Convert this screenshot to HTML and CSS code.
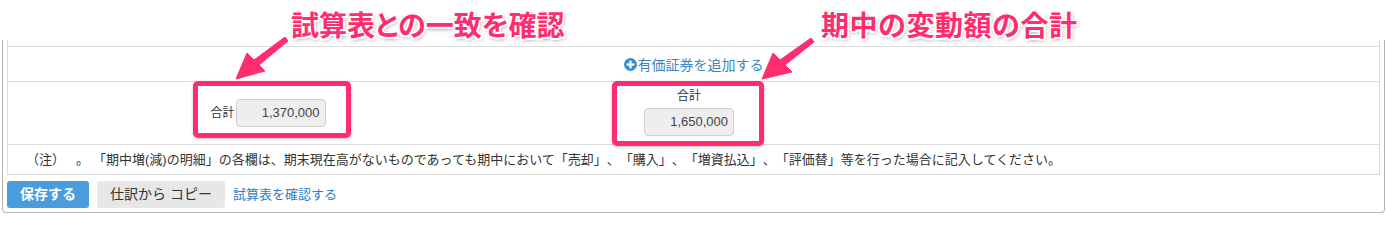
FILE: index.html
```html
<!DOCTYPE html>
<html lang="ja">
<head>
<meta charset="utf-8">
<title>有価証券</title>
<link rel="stylesheet" href="styles.css">
</head>
<body>
<div class="page">
  <div class="panel">
    <div class="grid">
      <div class="row row-top"></div>
      <div class="row row-add">
        <a class="add-link" href="#">
          <svg class="plus-icon" width="13" height="13" viewBox="0 0 13 13" aria-hidden="true">
            <circle cx="6.5" cy="6.5" r="6.5" fill="#3d8bd0"/>
            <rect x="5.4" y="2.6" width="2.2" height="7.8" fill="#fff"/>
            <rect x="2.6" y="5.4" width="7.8" height="2.2" fill="#fff"/>
          </svg><span>有価証券を追加する</span>
        </a>
      </div>
      <div class="row row-totals">
        <div class="total-a">
          <span class="total-label">合計</span>
          <div class="amount">1,370,000</div>
        </div>
        <div class="total-b">
          <span class="total-label stacked">合計</span>
          <div class="amount">1,650,000</div>
        </div>
      </div>
      <div class="row row-note">
        <span>（注）</span><span class="note-mark">。</span><span>「期中増(減)の明細」の各欄は、期末現在高がないものであっても期中において「売却」、「購入」、「増資払込」、「評価替」等を行った場合に記入してください。</span>
      </div>
    </div>
    <div class="actions">
      <button class="btn btn-primary" type="button">保存する</button>
      <button class="btn btn-default" type="button">仕訳から コピー</button>
      <a class="action-link" href="#">試算表を確認する</a>
    </div>
  </div>

  <div class="callout callout-1">試算表との一致を確認</div>
  <div class="callout callout-2">期中の変動額の合計</div>
  <div class="hl-box hl-box-1"></div>
  <div class="hl-box hl-box-2"></div>
  <svg class="arrows" width="1386" height="218" viewBox="0 0 1386 218" aria-hidden="true">
    <g class="arrow-shape">
      <polygon points="236,79 247,53 254,60 285,37 288,41 259,65 265,71"/>
      <polygon points="762,79 773,53 780,60 811,38 814,42 785,65 792,72"/>
    </g>
  </svg>
</div>
</body>
</html>
```

FILE: styles.css
```css
* { box-sizing: border-box; }

html, body {
  margin: 0;
  padding: 0;
  background: #fff;
}

body {
  font-family: "Liberation Sans", "Noto Sans CJK JP", sans-serif;
  color: #333;
  text-spacing-trim: space-all;
}

.page {
  position: relative;
  width: 1386px;
  height: 218px;
  overflow: hidden;
}

.panel {
  margin: 40px 0 0 2px;
  width: 1383px;
  border: 1px solid #b4b4b4;
  border-top: none;
  border-radius: 0 0 4px 4px;
  padding: 0 4px 4px 4px;
}

.grid {
  border-left: 1px solid #dcdcdc;
  border-right: 1px solid #dcdcdc;
}

.row {
  border-bottom: 1px solid #dcdcdc;
}

.row-top { height: 7px; }

.row-add {
  height: 35px;
  display: flex;
  align-items: center;
  justify-content: center;
}

.add-link {
  display: flex;
  align-items: center;
  gap: 1px;
  color: #3a87c8;
  text-decoration: none;
  font-size: 14px;
  line-height: 18px;
  margin-top: 1px;
}

.plus-icon { display: block; }

.row-totals {
  height: 63px;
  display: flex;
}

.total-a {
  width: 520px;
  display: flex;
  align-items: center;
  justify-content: center;
  gap: 1px;
}

.total-b {
  width: 322px;
  display: flex;
  flex-direction: column;
  align-items: center;
  padding-top: 5px;
}

.total-label {
  font-size: 12px;
  line-height: 18px;
  color: #333;
}

.total-label.stacked { margin-bottom: 3px; }

.amount {
  width: 90px;
  height: 28px;
  background: #eeeeee;
  border: 1px solid #cfcfcf;
  border-radius: 4px;
  text-align: right;
  padding: 0 5px;
  font-size: 13px;
  line-height: 26px;
  color: #444;
}

.row-note {
  height: 30px;
  display: flex;
  align-items: center;
  padding-left: 18px;
  font-size: 13px;
  line-height: 18px;
  color: #333;
  white-space: nowrap;
}

.note-mark { margin: 0 4px 0 11px; }

.actions {
  display: flex;
  align-items: center;
  gap: 8px;
  margin-top: 6px;
}

.btn {
  height: 27px;
  border: none;
  border-radius: 3px;
  font-family: "Liberation Sans", "Noto Sans CJK JP", sans-serif;
  font-size: 14px;
  line-height: 27px;
  padding: 0;
  cursor: pointer;
}

.btn-primary {
  width: 82px;
  background: #4b9cdc;
  color: #fff;
  font-weight: bold;
}

.btn-default {
  width: 128px;
  background: #e7e7e7;
  color: #333;
}

.action-link {
  color: #2f7dc3;
  text-decoration: none;
  font-size: 13px;
  line-height: 18px;
}

/* annotation overlay */
.callout {
  position: absolute;
  top: 9px;
  font-family: "Noto Sans CJK JP", sans-serif;
  font-weight: bold;
  font-size: 28px;
  line-height: 30px;
  color: #ff2d6f;
  white-space: nowrap;
  text-shadow:
    1.5px 0 0 #fff, -1.5px 0 0 #fff, 0 1.5px 0 #fff, 0 -1.5px 0 #fff,
    1.5px 1.5px 0 #fff, -1.5px -1.5px 0 #fff, 1.5px -1.5px 0 #fff, -1.5px 1.5px 0 #fff,
    1px 2px 4px rgba(0, 0, 0, 0.45);
}

.callout-1 { left: 291px; font-feature-settings: "palt"; }
.callout-2 { left: 821px; letter-spacing: 0.5px; }

.hl-box {
  position: absolute;
  border: 5px solid #ff2d6f;
  border-radius: 5px;
  box-shadow: 0 1px 3px rgba(0, 0, 0, 0.25);
}

.hl-box-1 { left: 193px; top: 81px; width: 158px; height: 57px; }
.hl-box-2 { left: 612px; top: 81px; width: 152px; height: 65px; }

.arrows {
  position: absolute;
  left: 0;
  top: 0;
  pointer-events: none;
}

.arrow-shape polygon {
  fill: #ff2d6f;
  stroke: #ff2d6f;
  stroke-width: 1;
  stroke-linejoin: round;
}
```
